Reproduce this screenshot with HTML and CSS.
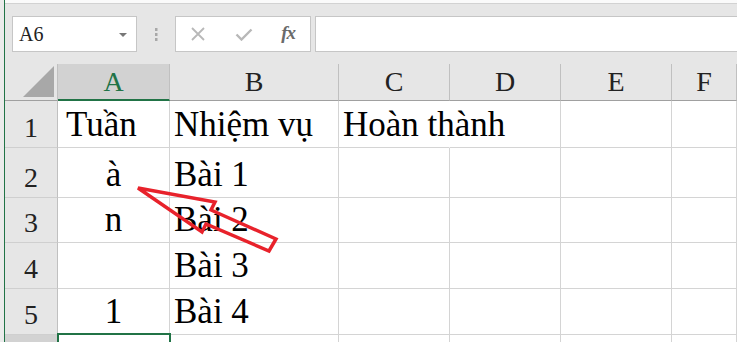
FILE: index.html
```html
<!DOCTYPE html>
<html>
<head>
	<title>Excel</title>
	<link rel="stylesheet" href="styles.css">
</head>
<body>
	<div class="window">
		<div class="gutter"></div>
		<div class="excel">
			<div class="topline"></div>
			<div class="formulaBar">
				<div class="nameBox">
					<span>A6</span>
					<span class="drop"></span>
				</div>
				<div class="grip">
					<svg width="4" height="14" viewBox="0 0 4 14"><rect x="1" y="0" width="2.5" height="3" fill="#a8a8a8"/><rect x="1" y="5" width="2.5" height="3" fill="#a8a8a8"/><rect x="1" y="10" width="2.5" height="3" fill="#a8a8a8"/></svg>
				</div>
				<div class="buttons">
					<svg class="btn" width="16" height="14" viewBox="0 0 16 14"><path d="M2 1 L14 13 M14 1 L2 13" stroke="#b8b8b8" stroke-width="1.8" fill="none"/></svg>
					<svg class="btn" width="18" height="13" viewBox="0 0 18 13"><path d="M1.5 6.5 L6.5 11.5 L16.5 1.5" stroke="#b8b8b8" stroke-width="2.4" fill="none"/></svg>
					<span class="fx">fx</span>
				</div>
				<div class="formulaInput"></div>
			</div>
			<div class="sheet">
				<div class="corner">
					<svg width="31" height="31" viewBox="0 0 31 31"><polygon points="0,31 31,31 31,0" fill="#a8a8a8"/></svg>
				</div>
				<div class="hd active">A</div>
				<div class="hd">B</div>
				<div class="hd">C</div>
				<div class="hd">D</div>
				<div class="hd">E</div>
				<div class="hd">F</div>

				<div class="rh">1</div>
				<div class="c first">Tuần</div>
				<div class="c">Nhiệm vụ</div>
				<div class="c spill">Hoàn thành</div>
				<div class="c"></div>
				<div class="c"></div>
				<div class="c"></div>

				<div class="rh">2</div>
				<div class="c ctr">à</div>
				<div class="c">Bài 1</div>
				<div class="c"></div>
				<div class="c"></div>
				<div class="c"></div>
				<div class="c"></div>

				<div class="rh">3</div>
				<div class="c ctr">n</div>
				<div class="c">Bài 2</div>
				<div class="c"></div>
				<div class="c"></div>
				<div class="c"></div>
				<div class="c"></div>

				<div class="rh">4</div>
				<div class="c ctr"></div>
				<div class="c">Bài 3</div>
				<div class="c"></div>
				<div class="c"></div>
				<div class="c"></div>
				<div class="c"></div>

				<div class="rh">5</div>
				<div class="c ctr">1</div>
				<div class="c">Bài 4</div>
				<div class="c"></div>
				<div class="c"></div>
				<div class="c"></div>
				<div class="c"></div>

				<!-- hàng 6 chỉ lộ ra vài px ở đáy -->
				<div class="rh activeRow"></div>
				<div class="c sel"></div>
				<div class="c"></div>
				<div class="c"></div>
				<div class="c"></div>
				<div class="c"></div>
				<div class="c"></div>
			</div>
		</div>
		<!-- mũi tên đỏ vẽ đè lên bảng -->
		<svg class="arrow" width="737" height="342" viewBox="0 0 737 342">
			<polygon points="138,188 215,202 211,210 276,239 269,251 206,224 202,232" fill="none" stroke="#e8222b" stroke-width="3.5" stroke-linejoin="miter"/>
		</svg>
	</div>
</body>
</html>
```

FILE: styles.css
```css
* {
	box-sizing: border-box;
}

body {
	margin: 0;
	font-family: "Liberation Serif", "Times New Roman", serif;
	background-color: #e6e6e6;
}

.window {
	position: relative;
	display: flex;
	width: 737px;
	height: 342px;
	overflow: hidden;
}

.gutter {
	width: 4px;
	flex-shrink: 0;
	background-color: #ebebeb;
}

.excel {
	flex: 1;
	display: flex;
	flex-direction: column;
	border-left: 1px solid #217346;
	background-color: #e6e6e6;
	min-width: 0;
	overflow: hidden;
}

.topline {
	flex-shrink: 0;
	height: 4px;
	background-color: #fafafa;
	border-bottom: 1px solid #d2d2d2;
}

.formulaBar {
	flex-shrink: 0;
	display: flex;
	height: 60px;
	padding: 12px 0 0 7px;
	align-items: flex-start;
}

.nameBox {
	display: flex;
	align-items: center;
	justify-content: space-between;
	width: 125px;
	height: 36px;
	padding: 0 9px 0 6px;
	background-color: #fff;
	border: 1px solid #c6c6c6;
	font-size: 20px;
	color: #222;
}

.drop {
	width: 0;
	height: 0;
	border-left: 4px solid transparent;
	border-right: 4px solid transparent;
	border-top: 4px solid #777;
	margin-top: 2px;
}

.grip {
	display: flex;
	justify-content: center;
	width: 38px;
	height: 36px;
	padding-top: 12px;
}

.buttons {
	display: flex;
	align-items: center;
	justify-content: space-between;
	width: 136px;
	height: 36px;
	padding: 0 15px 0 14px;
	background-color: #fff;
	border: 1px solid #c6c6c6;
}

.btn {
	display: block;
}

.fx {
	font-style: italic;
	font-weight: bold;
	font-size: 19px;
	color: #6a6a6a;
	letter-spacing: -1px;
	margin-bottom: 2px;
}

.formulaInput {
	flex: 1;
	height: 36px;
	margin-left: 4px;
	background-color: #fff;
	border: 1px solid #c6c6c6;
	border-right: none;
}

.sheet {
	flex-shrink: 0;
	display: grid;
	grid-template-columns: 53px 112px 169px 111px 111px 111px 1fr;
	grid-template-rows: 37px 47px 50px 45px 46px 46px 46px;
	background-color: #fff;
}

.corner {
	display: flex;
	align-items: flex-end;
	justify-content: flex-end;
	padding: 0 3px 3px 0;
	background-color: #e6e6e6;
	border-right: 1px solid #c0c0c0;
	border-bottom: 1px solid #a0a0a0;
}

.corner svg {
	display: block;
}

.hd {
	display: flex;
	align-items: flex-end;
	justify-content: center;
	padding-bottom: 4px;
	background-color: #e6e6e6;
	border-right: 1px solid #c0c0c0;
	border-bottom: 1px solid #a0a0a0;
	font-size: 28px;
	line-height: 1;
	color: #222;
}

.hd.active {
	background-color: #d2d2d2;
	border-bottom: 2px solid #217346;
	color: #217346;
	padding-bottom: 3px;
}

.rh {
	display: flex;
	align-items: flex-end;
	justify-content: center;
	padding-bottom: 5px;
	background-color: #e6e6e6;
	border-right: 1px solid #c0c0c0;
	border-bottom: 1px solid #cfcfcf;
	font-size: 28px;
	line-height: 1;
	color: #222;
}

.rh.activeRow {
	background-color: #d2d2d2;
}

.c {
	display: flex;
	align-items: flex-end;
	padding: 0 0 5px 4px;
	border-right: 1px solid #d4d4d4;
	border-bottom: 1px solid #d4d4d4;
	font-size: 35px;
	line-height: 1;
	white-space: nowrap;
	color: #000;
}

.c.first {
	padding-left: 8px;
}

.c.ctr {
	justify-content: center;
	padding-left: 0;
}

.c.spill {
	border-right-color: transparent;
}

.c.sel {
	position: relative;
}

.c.sel::after {
	content: "";
	position: absolute;
	top: -2px;
	left: -1px;
	right: -2px;
	bottom: -2px;
	border: 2px solid #217346;
}

.arrow {
	position: absolute;
	top: 0;
	left: 0;
	pointer-events: none;
}
```
